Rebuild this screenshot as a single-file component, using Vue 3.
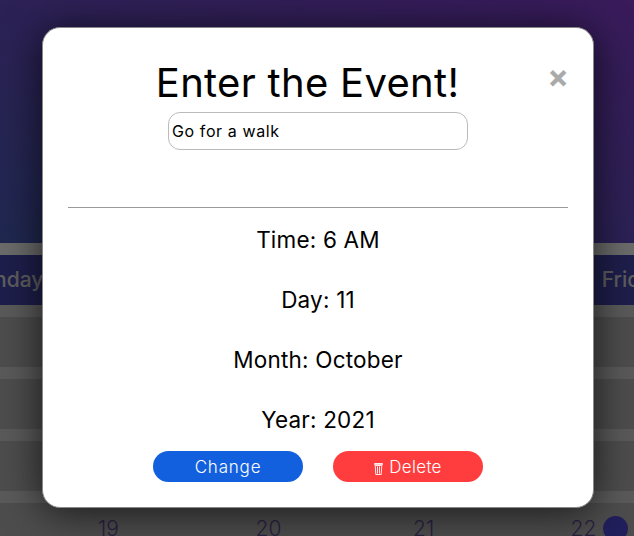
<template>
  <div class="page">
    <div class="hero"></div>
    <div class="strip"></div>
    <div class="calendar">
      <div v-for="day in days" :key="day" class="weekday">{{ day }}</div>
      <div v-for="(cell, index) in cells" :key="index" class="cell">
        <span class="cell-num">{{ cell }}</span>
        <span v-if="cell === 22" class="dot"></span>
      </div>
    </div>

    <div class="overlay">
      <div class="modal">
        <span class="close">&times;</span>
        <h1 class="title">Enter the Event!</h1>
        <input class="event-input" type="text" v-model="eventName" />
        <hr class="divider" />
        <p v-for="row in details" :key="row" class="detail">{{ row }}</p>
        <div class="actions">
          <button class="btn change">Change</button>
          <button class="btn delete">
            <svg class="trash" viewBox="0 0 9 13" width="9" height="13">
              <path d="M.5 1.5h8v1.2h-8zM1.2 3.5h6.6l-.6 9H1.8z" fill="none" stroke="#fff" stroke-width=".9" />
              <path d="M3.5 4.5v7M5.5 4.5v7" stroke="#fff" stroke-width=".9" />
            </svg>
            Delete
          </button>
        </div>
      </div>
    </div>
  </div>
</template>

<script setup>
import { ref } from "vue";

const eventName = ref("Go for a walk");
const days = ["Monday", "Tuesday", "Wednesday", "Thursday", "Friday"];
const details = ["Time: 6 AM", "Day: 11", "Month: October", "Year: 2021"];
// only the last row of numbers is visible under the modal
const cells = ["", "", "", "", "", "", "", "", "", "", "", "", "", "", "", 18, 19, 20, 21, 22];
</script>

<style>
html,
body {
  margin: 0;
  height: 100%;
  overflow: hidden;
}
</style>

<style scoped>
.page {
  position: relative;
  width: 634px;
  height: 536px;
  overflow: hidden;
  background: #c8c8c8;
  font-family: "Inter", "Liberation Sans", sans-serif;
}

.hero {
  height: 243px;
  background: linear-gradient(20deg, #4659b0, #803ccb);
}

.strip {
  height: 12px;
  background: #eee;
}

.calendar {
  display: grid;
  grid-template-columns: repeat(5, 157.5px);
  grid-template-rows: 50px;
  grid-auto-rows: 62px;
  margin-left: -76px;
  width: 788px;
}

.weekday {
  background: #4444a8;
  color: #d0d0d0;
  font-size: 21px;
  font-weight: 500;
  line-height: 50px;
  text-align: center;
  white-space: nowrap;
}

.cell {
  background: #aaa;
  border-top: 12px solid #c8c8c8;
  box-sizing: border-box;
  position: relative;
  padding: 13px 0 0 16.5px;
  color: #5f4a90;
  font-size: 21px;
  font-weight: 300;
}

.dot {
  position: absolute;
  width: 25px;
  height: 25px;
  border-radius: 50%;
  background: #4b45cc;
  left: 49px;
  top: 13px;
}

.overlay {
  position: absolute;
  inset: 0;
  display: flex;
  align-items: flex-start;
  justify-content: center;
  padding: 27px 0 0 2px;
  box-sizing: border-box;
  background: rgba(0, 0, 0, 0.55);
}

.modal {
  position: relative;
  width: 550px;
  height: 479px;
  background: #fff;
  border: 1px solid #888;
  border-radius: 18px;
  box-shadow: 0 4px 40px rgba(0, 0, 0, 0.7);
  display: flex;
  flex-direction: column;
  align-items: center;
}

.close {
  position: absolute;
  top: 24px;
  right: 24px;
  color: #aaa;
  font-size: 32px;
  font-weight: 700;
  line-height: 50px;
}

.title {
  margin: 26px 21px 0 0;
  font-size: 40px;
  font-weight: 400;
  letter-spacing: 0.3px;
  line-height: 58px;
  color: #000;
}

.event-input {
  width: 300px;
  height: 38px;
  box-sizing: border-box;
  padding: 0 3px;
  border: 1px solid #bbb;
  border-radius: 12px;
  font-family: inherit;
  font-size: 16px;
  letter-spacing: 0.6px;
  color: #000;
}

.divider {
  width: 500px;
  margin: 57px 0 0;
  border: 0;
  border-top: 1px solid #999;
}

.detail {
  margin: 0;
  height: 60px;
  line-height: 64px;
  font-size: 22.5px;
  letter-spacing: 0.2px;
  color: #000;
}

.actions {
  display: flex;
  gap: 30px;
  margin-top: 3px;
}

.btn {
  width: 150px;
  height: 31px;
  border: 0;
  border-radius: 16px;
  color: #fff;
  font-family: inherit;
  font-size: 17px;
  font-weight: 300;
  letter-spacing: 0.3px;
}

.change {
  background: #1360df;
  letter-spacing: 0.8px;
}

.delete {
  background: #ff3d3f;
}

.trash {
  vertical-align: -2px;
  margin-right: 1px;
}
</style>
